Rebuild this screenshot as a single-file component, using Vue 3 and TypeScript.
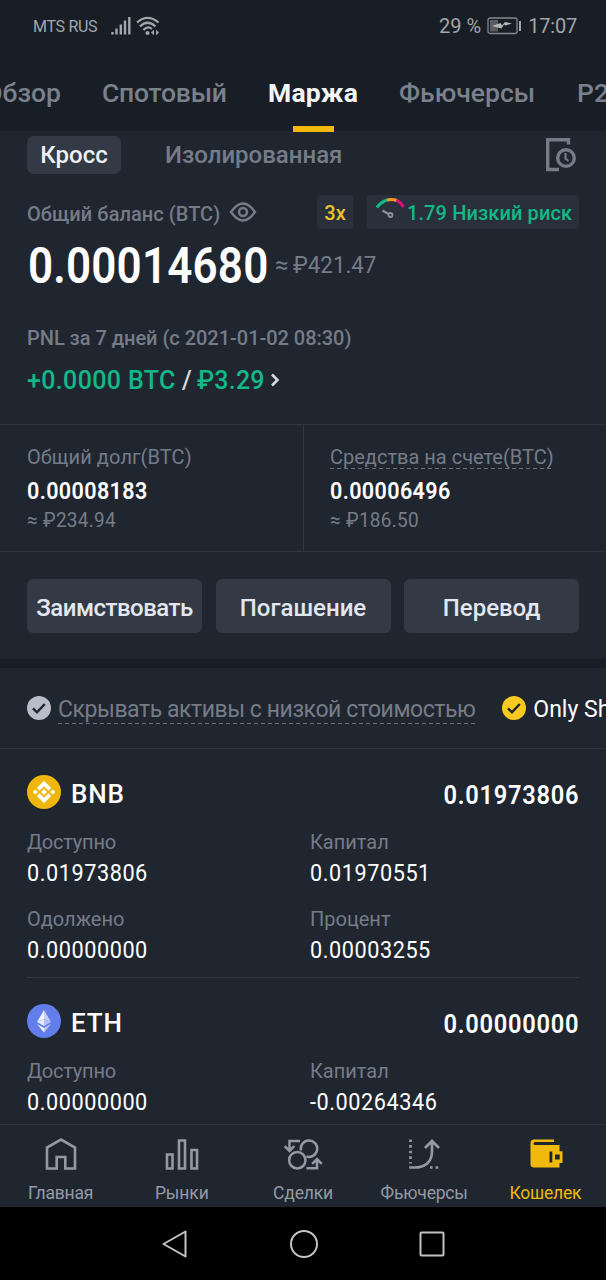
<script setup lang="ts">
interface Field {
  label: string
  value: string
}
interface Asset {
  symbol: string
  total: string
  fields: Field[]
}

const tabs = [
  { name: 'Обзор', cls: 'w-overview' },
  { name: 'Спотовый', cls: 'w-spot' },
  { name: 'Маржа', cls: 'w-margin', active: true },
  { name: 'Фьючерсы', cls: 'w-futures' },
  { name: 'P2P', cls: 'w-p2p' },
]

const assets: Asset[] = [
  {
    symbol: 'BNB',
    total: '0.01973806',
    fields: [
      { label: 'Доступно', value: '0.01973806' },
      { label: 'Капитал', value: '0.01970551' },
      { label: 'Одолжено', value: '0.00000000' },
      { label: 'Процент', value: '0.00003255' },
    ],
  },
  {
    symbol: 'ETH',
    total: '0.00000000',
    fields: [
      { label: 'Доступно', value: '0.00000000' },
      { label: 'Капитал', value: '-0.00264346' },
    ],
  },
]
</script>

<template>
  <div class="screen">
    <header class="head">
      <div class="status">
        <span class="carrier">MTS RUS</span>
        <svg class="signal" width="20" height="20" viewBox="0 0 20 20">
          <path d="M1.500 16v2.500M5.500 12.500v6M9.800 8.500v10M14 4.500v14M18.300 1v17.500" stroke="#a2a5a9" stroke-width="2.400" fill="none" />
        </svg>
        <svg class="wifi" width="24" height="20" viewBox="0 0 24 20">
          <g fill="none" stroke="#a2a5a9" stroke-width="2.200">
            <path d="M1 6.500Q11.500-2.800 22.500 6.500" />
            <path d="M4 10.500Q11.500 3 19.500 10.500" />
            <path d="M7.500 14Q11.500 9.500 16 13" />
          </g>
          <circle cx="11.500" cy="17" r="2" fill="#a2a5a9" />
          <path d="M15 16.500l3-2.700v5.400zM23 16.500l-3-2.700v5.400z" fill="#a2a5a9" />
        </svg>
        <span class="percent">29 %</span>
        <svg class="battery" width="35" height="18" viewBox="0 0 35 18">
          <rect x="1" y="1" width="29" height="15.500" rx="2" fill="none" stroke="#85888c" stroke-width="1.300" />
          <rect x="3" y="3" width="8" height="11.500" fill="#5a5e63" />
          <path d="M5 9l8.500-3 1.500 2.500 3-3.500 7 1.500-6.500 2-1.500-1-2.500 4z" fill="#b4b6b8" />
          <path d="M33 4v10" stroke="#a2a5a9" stroke-width="2" />
        </svg>
        <span class="clock">17:07</span>
      </div>
      <nav class="tabs">
        <div v-for="t in tabs" :key="t.name" class="tab" :class="[t.cls, { active: t.active }]">
          <span>{{ t.name }}</span>
        </div>
      </nav>
    </header>

    <main class="body">
      <div class="modes">
        <span class="chip">Кросс</span>
        <span class="mode">Изолированная</span>
        <svg class="history" width="32" height="36" viewBox="0 0 32 36">
          <g fill="none" stroke="#757c88" stroke-width="3.400">
            <path d="M23.500 7.500V2.700H2.700V32.500H14" />
            <circle cx="21" cy="21" r="8.300" />
            <path d="M20.500 16v5.500l3 2.500" stroke-width="2.200" />
          </g>
        </svg>
      </div>

      <div class="balance-row">
        <span class="balance-label">Общий баланс (BTC)</span>
        <svg class="eye" width="28" height="20" viewBox="0 0 28 20">
          <path d="M2 10Q8 1.500 14 1.500T26 10Q20 18.500 14 18.500T2 10Z" fill="none" stroke="#757c88" stroke-width="2.300" />
          <circle cx="14" cy="10" r="4" fill="none" stroke="#757c88" stroke-width="2.500" />
        </svg>
        <span class="badge leverage">3x</span>
        <span class="badge risk">
          <svg width="30" height="24" viewBox="0 0 30 24">
            <g fill="none" stroke-width="3">
              <path d="M2 12.500Q5 7.500 12 5" stroke="#12b886" />
              <path d="M12 5Q17 3.800 22 5.500" stroke="#f79a1f" />
              <path d="M21.500 5.200Q26 7.500 28.500 12" stroke="#d8127d" />
            </g>
            <path d="M7.500 15.500l6.500 3.700" stroke="#8b919c" stroke-width="2.400" />
            <circle cx="15.500" cy="20" r="2" fill="none" stroke="#8b919c" stroke-width="1.800" />
          </svg>
          <span class="risk-text">1.79 Низкий риск</span>
        </span>
      </div>

      <div class="total">
        <span class="total-btc">0.00014680</span>
        <span class="total-rub">≈ <span class="narrow">₽421.47</span></span>
      </div>

      <div class="pnl-label">PNL за 7 дней (с 2021-01-02 08:30)</div>
      <div class="pnl">
        <span class="pnl-btc">+0.0000 BTC</span>
        <span class="slash">/</span>
        <span class="pnl-rub">₽3.29</span>
        <svg width="10" height="14" viewBox="0 0 10 14">
          <path d="M2 1.500L7.500 7 2 12.500" fill="none" stroke="#d5d9df" stroke-width="2.600" />
        </svg>
      </div>

      <div class="stats">
        <div class="stat">
          <div class="stat-label"><span class="debt">Общий долг(BTC)</span></div>
          <div class="stat-value">0.00008183</div>
          <div class="stat-rub">≈ ₽234.94</div>
        </div>
        <div class="stat">
          <div class="stat-label"><span class="funds">Средства на счете(BTC)</span></div>
          <div class="stat-value">0.00006496</div>
          <div class="stat-rub">≈ ₽186.50</div>
        </div>
      </div>

      <div class="actions">
        <button class="borrow">Заимствовать</button>
        <button class="repay">Погашение</button>
        <button class="transfer">Перевод</button>
      </div>

      <div class="band"></div>

      <div class="filters">
        <svg width="24" height="24" viewBox="0 0 24 24">
          <circle cx="12" cy="12" r="12" fill="#b7bdc8" />
          <path d="M6 12.300l4 4 7.800-8.300" fill="none" stroke="#20262f" stroke-width="2.500" />
        </svg>
        <span class="hide-low">Скрывать активы с низкой стоимостью</span>
        <svg class="second" width="24" height="24" viewBox="0 0 24 24">
          <circle cx="12" cy="12" r="12" fill="#f8ca20" />
          <path d="M6 12.300l4 4 7.800-8.300" fill="none" stroke="#20262f" stroke-width="2.500" />
        </svg>
        <span class="only">Only Show</span>
      </div>

      <section v-for="a in assets" :key="a.symbol" class="asset">
        <div class="asset-head">
          <svg v-if="a.symbol === 'BNB'" width="34" height="34" viewBox="0 0 34 34">
            <circle cx="17" cy="17" r="17" fill="#efb60c" />
            <g fill="#fff">
              <path d="M17 5.800l7.200 7.200-2.700 2.700-4.500-4.500-4.500 4.500L9.800 13z" />
              <path d="M17 28.200l7.200-7.200-2.700-2.700-4.500 4.500-4.500-4.500L9.800 21z" />
              <path d="M17 14l3 3-3 3-3-3zM8.300 14.500l2.500 2.500-2.500 2.500L5.800 17zM25.700 14.500l2.500 2.500-2.500 2.500-2.500-2.500z" />
            </g>
          </svg>
          <svg v-else width="34" height="34" viewBox="0 0 34 34">
            <circle cx="17" cy="17" r="17" fill="#627eea" />
            <path d="M17 6v9l-7 3z" fill="#f0f2fd" />
            <path d="M17 6v9l7 3z" fill="#c3cdf8" />
            <path d="M10 18l7-3v7z" fill="#e3e8fc" />
            <path d="M24 18l-7-3v7z" fill="#b3c0f6" />
            <path d="M10 20l7 4v4.500z" fill="#f0f2fd" />
            <path d="M24 20l-7 4v4.500z" fill="#c3cdf8" />
          </svg>
          <span class="symbol">{{ a.symbol }}</span>
          <span class="asset-total">{{ a.total }}</span>
        </div>
        <div class="fields">
          <div v-for="f in a.fields" :key="f.label" class="field">
            <div class="field-label">{{ f.label }}</div>
            <div class="field-value">{{ f.value }}</div>
          </div>
        </div>
      </section>
    </main>

    <nav class="bottom">
      <div class="item">
        <svg width="36" height="36" viewBox="0 0 36 36">
          <path d="M4 32.500V11.500L18 3.500l14 8V32.500H22.300V21h-8.600v11.500z" fill="none" stroke="#949aa5" stroke-width="2.600" />
        </svg>
        <span class="n1">Главная</span>
      </div>
      <div class="item">
        <svg width="36" height="36" viewBox="0 0 36 36">
          <path d="M3 18.500h5.500v14H3zM15 4.500h6v28h-6zM27.500 14h5.500v18.500h-5.500z" fill="none" stroke="#949aa5" stroke-width="2.600" />
        </svg>
        <span class="n2">Рынки</span>
      </div>
      <div class="item">
        <svg width="42" height="36" viewBox="0 0 42 36">
          <g fill="none" stroke="#949aa5" stroke-width="2.500">
            <path d="M18 5H7.500V14M2.700 10.200L7.500 15l4.800-4.800" />
            <circle cx="15.300" cy="24.200" r="8.200" />
            <path d="M19 14.500a8.200 8.200 0 1 1 5.500 6" />
            <path d="M24.500 32.300H35V23.500M30.200 27.800L35 23l4.800 4.800" />
          </g>
        </svg>
        <span class="n3">Сделки</span>
      </div>
      <div class="item">
        <svg width="36" height="36" viewBox="0 0 36 36">
          <g fill="none" stroke="#949aa5" stroke-width="2.700">
            <path d="M4.500 3.500v24" stroke-dasharray="2.600 3" />
            <path d="M3.200 31.500H8C19 31.500 26 26 26 15V6M19 12l7-7 7 7" />
            <path d="M24 31.500h9" stroke-dasharray="2.600 3" />
          </g>
        </svg>
        <span class="n4">Фьючерсы</span>
      </div>
      <div class="item on">
        <svg width="36" height="36" viewBox="0 0 36 36">
          <path d="M7 3.500H27v2.500H8Q6.500 6 6.500 7.500T8 9H32.500v6.300H35.500V27h-3v4.500H7q-3.500 0-3.500-3.500V7Q3.500 3.500 7 3.500z" fill="#f0b90b" />
          <path d="M22.500 15.500h2.800v11h-2.800zM28 18.500h4.700v5H28z" fill="#202630" />
        </svg>
        <span class="n5">Кошелек</span>
      </div>
    </nav>

    <div class="system">
      <svg width="28" height="30" viewBox="0 0 28 30">
        <path d="M24.500 2.500v25L2.500 15z" fill="none" stroke="#c3c3c3" stroke-width="2" stroke-linejoin="round" />
      </svg>
      <svg width="30" height="30" viewBox="0 0 30 30">
        <circle cx="15" cy="15" r="13" fill="none" stroke="#c3c3c3" stroke-width="2" />
      </svg>
      <svg width="28" height="28" viewBox="0 0 28 28">
        <rect x="2.500" y="2.500" width="23" height="23" rx="1" fill="none" stroke="#c3c3c3" stroke-width="2" />
      </svg>
    </div>
  </div>
</template>

<style>
body {
  margin: 0;
  background: #000;
}
</style>

<style scoped>
.screen {
  width: 606px;
  height: 1280px;
  overflow: hidden;
  display: flex;
  flex-direction: column;
  background: #202630;
  color: #fff;
  font-family: Roboto, "Noto Sans", sans-serif;
  white-space: nowrap;
}
.screen * {
  box-sizing: border-box;
}
svg {
  display: block;
  flex: none;
}
.head {
  height: 131px;
  flex: none;
  background: #181e26;
}
.status {
  height: 52px;
  display: flex;
  align-items: center;
  padding: 0 29px 0 33px;
  color: #a2a5a9;
}
.carrier {
  width: 78px;
  font-size: 16px;
  letter-spacing: -0.3px;
}
.wifi {
  margin-left: 5px;
}
.percent {
  margin-left: auto;
  font-size: 20px;
}
.battery {
  margin: 0 6px;
}
.clock {
  font-size: 20px;
  letter-spacing: -0.2px;
}
.tabs {
  display: flex;
  gap: 41px;
  height: 80px;
  margin-left: -22px;
  padding-top: 21px;
  font-size: 26.5px;
  font-weight: 500;
  line-height: 40px;
  color: #7a818c;
}
.tab {
  flex: none;
  position: relative;
  height: 59px;
}
.w-overview { width: 83px; text-align: right; }
.w-spot { width: 125px; letter-spacing: -0.2px; }
.w-margin { width: 90px; letter-spacing: 0.2px; }
.w-futures { width: 137px; }
.w-p2p { width: 60px; }
.tab.active {
  color: #f4f5f7;
  font-weight: 700;
}
.tab.active::after {
  content: "";
  position: absolute;
  left: 25px;
  bottom: 0;
  width: 41px;
  height: 6px;
  background: #f0b90b;
}
.body {
  height: 993px;
  flex: none;
  overflow: hidden;
}
.modes {
  height: 48px;
  display: flex;
  align-items: center;
  padding: 0 29px 0 27px;
  font-size: 24px;
  font-weight: 500;
}
.chip {
  width: 94px;
  height: 38px;
  border-radius: 7px;
  background: #333a45;
  color: #edf0f4;
  line-height: 38px;
  text-align: center;
}
.mode {
  margin-left: 44px;
  color: #757c88;
  line-height: 32px;
}
.history {
  margin-left: auto;
}
.balance-row {
  height: 66px;
  display: flex;
  align-items: center;
  padding: 0 27px;
  font-size: 20px;
  color: #757c88;
}
.balance-label {
  width: 202px;
  padding-top: 3px;
  font-weight: 500;
  letter-spacing: 0.05px;
}
.badge {
  height: 34px;
  border-radius: 4px;
  background: #29303b;
  font-weight: 500;
  line-height: 36px;
}
.leverage {
  width: 36px;
  margin-left: auto;
  text-align: center;
  color: #f0c02c;
}
.risk {
  display: flex;
  width: 212px;
  margin-left: 14px;
  padding-left: 8px;
  color: #12b886;
}
.risk-text {
  margin-left: 2px;
  letter-spacing: 0.1px;
}
.total {
  height: 66px;
  display: flex;
  padding-left: 28px;
}
.total-btc {
  width: 247px;
  font-size: 50px;
  font-weight: 600;
  line-height: 43px;
  letter-spacing: 0.2px;
  transform: scaleX(0.88);
  transform-origin: 0 0;
}
.total-rub {
  font-size: 24px;
  line-height: 41px;
  color: #757c88;
}
.total-rub .narrow {
  display: inline-block;
  margin-left: -1px;
  transform: scaleX(0.93);
  transform-origin: 0 0;
}
.pnl-label {
  height: 54px;
  padding-left: 27px;
  font-size: 20px;
  line-height: 55px;
  font-weight: 500;
  letter-spacing: -0.03px;
  color: #757c88;
}
.pnl {
  height: 59px;
  display: flex;
  align-items: center;
  padding: 0 0 29px 27px;
  font-size: 25px;
  font-weight: 500;
  color: #12b886;
}
.pnl-btc { width: 155px; letter-spacing: 0.35px; }
.slash { width: 15px; color: #d5d9df; }
.pnl-rub { width: 73px; letter-spacing: 0.2px; }
.stats {
  height: 128px;
  display: flex;
  border-top: 1px solid #303742;
  border-bottom: 1px solid #303742;
}
.stat {
  width: 303px;
  padding: 20px 0 0 27px;
}
.stat + .stat {
  padding-left: 26px;
  border-left: 1px solid #303742;
}
.stat-label {
  height: 32px;
  font-size: 20px;
  line-height: 24px;
  color: #757c88;
}
.stat-label span {
  display: inline-block;
}
.debt {
  letter-spacing: 0.1px;
}
.funds,
.hide-low {
  background: repeating-linear-gradient(90deg, #68707c 0 4px, transparent 4px 7px) bottom / 100% 1px no-repeat;
}
.stat-value {
  font-size: 23.5px;
  font-weight: 600;
  line-height: 29px;
  letter-spacing: 0.4px;
  transform: scaleX(0.917);
  transform-origin: 0 0;
}
.stat-rub {
  font-size: 20px;
  line-height: 29px;
  letter-spacing: 0.3px;
  transform: scaleX(0.95);
  transform-origin: 0 0;
  color: #757c88;
}
.actions {
  height: 107px;
  display: flex;
  justify-content: space-between;
  padding: 27px 27px 0;
}
.actions button {
  width: 175px;
  height: 54px;
  padding: 3px 0 0;
  border: 0;
  border-radius: 6px;
  background: #333a45;
  color: #e3e7ef;
  font-family: inherit;
  font-size: 24px;
  font-weight: 500;
}
.actions .borrow {
  letter-spacing: -0.5px;
}
.band {
  height: 9px;
  background: #181e26;
}
.filters {
  height: 81px;
  display: flex;
  align-items: center;
  padding-left: 27px;
  border-bottom: 1px solid #303742;
  font-size: 23px;
}
.hide-low {
  width: 418px;
  height: 28px;
  margin: 3px 0 0 7px;
  line-height: 28px;
  letter-spacing: -0.44px;
  color: #757c88;
}
.second {
  margin-left: 27px;
}
.only {
  margin: 3px 0 0 7px;
}
.asset {
  height: 229px;
  margin: 0 27px;
  padding-top: 26px;
  border-bottom: 1px solid #303742;
}
.asset-head {
  height: 34px;
  display: flex;
  align-items: center;
}
.symbol {
  margin: 3px 0 0 10px;
  font-size: 26px;
  font-weight: 500;
  letter-spacing: 0.8px;
}
.asset-total {
  margin: 6px 0 0 auto;
  font-size: 25.5px;
  font-weight: 600;
  letter-spacing: 0.8px;
  transform: scaleX(0.928);
  transform-origin: 100% 0;
}
.fields {
  display: flex;
  flex-wrap: wrap;
  padding-top: 18px;
}
.field {
  width: 283px;
  height: 77px;
}
.field:nth-child(even) {
  width: 269px;
}
.field-label {
  font-size: 20px;
  line-height: 30px;
  color: #757c88;
}
.field:first-child .field-label {
  letter-spacing: -0.2px;
}
.field-value {
  font-size: 23.5px;
  line-height: 33px;
  letter-spacing: 0.6px;
  transform: scaleX(0.922);
  transform-origin: 0 0;
}
.bottom {
  height: 83px;
  flex: none;
  display: flex;
  border-top: 1px solid #303742;
  font-size: 17.5px;
  color: #949aa5;
}
.item {
  width: 121.2px;
  display: flex;
  flex-direction: column;
  align-items: center;
  padding-top: 11px;
}
.item span {
  margin-top: 9px;
  line-height: 24px;
  letter-spacing: -0.2px;
}
.item .n2 {
  letter-spacing: -0.1px;
}
.on {
  color: #f0b90b;
}
.system {
  height: 73px;
  flex: none;
  display: flex;
  align-items: center;
  justify-content: center;
  gap: 99px;
  background: #000;
}
.system svg:first-child {
  margin-right: 1px;
}
</style>
